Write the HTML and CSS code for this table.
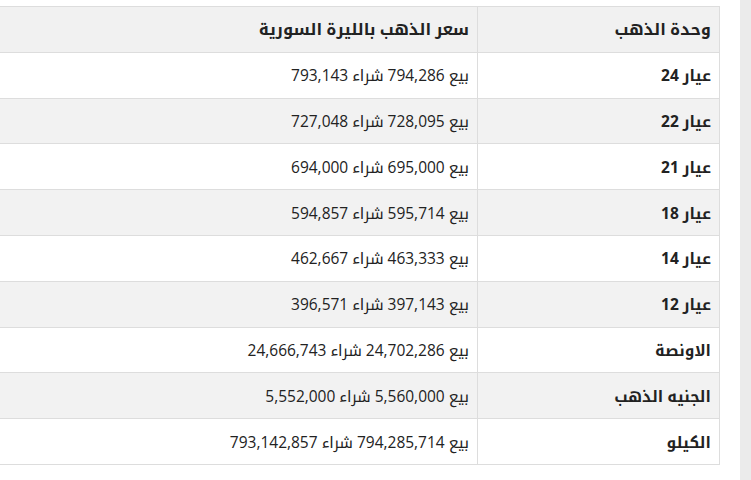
FILE: index.html
```html
<!DOCTYPE html>
<html lang="ar" dir="rtl">
<head>
<meta charset="utf-8">
<link rel="stylesheet" href="styles.css">
</head>
<body>
<div class="page">
  <aside class="side"></aside>
  <main class="main">
    <table class="gold">
      <thead>
        <tr><th class="unit">وحدة الذهب</th><th>سعر الذهب بالليرة السورية</th></tr>
      </thead>
      <tbody>
        <tr><td class="unit">عيار 24</td><td>بيع 794,286 شراء 793,143</td></tr>
        <tr><td class="unit">عيار 22</td><td>بيع 728,095 شراء 727,048</td></tr>
        <tr><td class="unit">عيار 21</td><td>بيع 695,000 شراء 694,000</td></tr>
        <tr><td class="unit">عيار 18</td><td>بيع 595,714 شراء 594,857</td></tr>
        <tr><td class="unit">عيار 14</td><td>بيع 463,333 شراء 462,667</td></tr>
        <tr><td class="unit">عيار 12</td><td>بيع 397,143 شراء 396,571</td></tr>
        <tr><td class="unit">الاونصة</td><td>بيع 24,702,286 شراء 24,666,743</td></tr>
        <tr><td class="unit">الجنيه الذهب</td><td>بيع 5,560,000 شراء 5,552,000</td></tr>
        <tr><td class="unit">الكيلو</td><td>بيع 794,285,714 شراء 793,142,857</td></tr>
      </tbody>
    </table>
  </main>
</div>
</body>
</html>
```
FILE: styles.css
```css
html, body {
  margin: 0;
  padding: 0;
  background: #fff;
  overflow: hidden;
}
body {
  font-family: "Open Sans", "Noto Kufi Arabic", sans-serif;
  font-size: 15.5px;
  color: #222;
}
.page {
  display: flex;
  flex-direction: row;
  width: 751px;
  height: 480px;
}
.side {
  width: 11px;
  flex: none;
  background: #ebebeb;
}
.main {
  width: 740px;
  flex: none;
  padding: 6px 20px 0 0;
  box-sizing: border-box;
  overflow: hidden;
  display: flex;
  justify-content: flex-start;
  align-items: flex-start;
}
.gold {
  border-collapse: collapse;
  width: 760px;
  flex: none;
  border: 1px solid #ddd;
  text-align: right;
}
.gold tr {
  height: 45.8px;
}
.gold th, .gold td {
  border: 1px solid #ddd;
  padding: 0 8px;
  line-height: 20px;
  white-space: nowrap;
  vertical-align: middle;
}
.gold th {
  background: #f1f1f1;
  font-weight: bold;
  font-size: 16.2px;
}
.gold .unit {
  width: 225px;
  font-weight: bold;
}
.gold tbody tr:nth-child(even) {
  background: #f2f2f2;
}
```
